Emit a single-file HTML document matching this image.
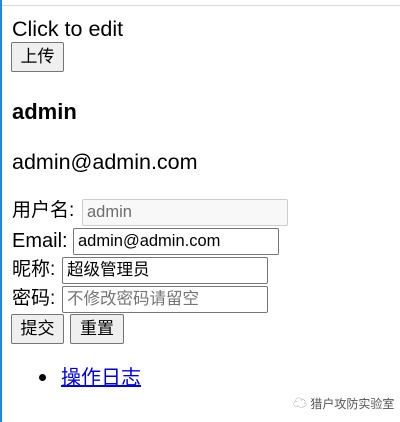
<!DOCTYPE html>
<html><head><meta charset="utf-8"><style>
html,body{margin:0;padding:0;width:400px;height:422px;overflow:hidden;background:#fff;position:relative;font-family:"Liberation Sans","Noto Sans CJK SC",sans-serif;color:#000}
.a{position:absolute;white-space:nowrap}
.lb{font-size:19px;line-height:22px}
.in{position:absolute;box-sizing:border-box;border:1px solid #767676;border-radius:2px;background:#fff;font-size:16.5px;line-height:24px;padding-left:4px;height:27px;width:206px;color:#000;font-family:"Liberation Sans","Noto Sans CJK SC",sans-serif}
.bt{position:absolute;box-sizing:border-box;border:1px solid #767676;border-radius:2px;background:#efefef;font-size:17px;text-align:center;line-height:27px;height:30px}
</style></head><body>
<div class="a" style="left:0;top:0;width:2px;height:422px;background:#1e88e5"></div>
<div class="a" style="left:2px;top:5px;width:398px;height:1px;background:#d8d8d8"></div>
<div class="a lb" style="left:12px;top:18px;font-size:21.5px">Click to edit</div>
<div class="bt" style="left:11px;top:42px;width:53px">上传</div>
<div class="a" style="left:12px;top:99px;font-size:22px;font-weight:bold;line-height:26px">admin</div>
<div class="a" style="left:12px;top:150px;font-size:21.5px;line-height:24px">admin@admin.com</div>
<div class="a lb" style="left:12px;top:200px">用户名:</div>
<div class="in" style="left:82px;top:199px;width:206px;background:#f8f8f8;border-color:#ccc;color:#6d6d6d">admin</div>
<div class="a lb" style="left:12px;top:230px;font-size:20px">Email:</div>
<div class="in" style="left:73px;top:228px;width:206px">admin@admin.com</div>
<div class="a lb" style="left:12px;top:259px">昵称:</div>
<div class="in" style="left:62px;top:257px;width:206px">超级管理员</div>
<div class="a lb" style="left:12px;top:288px">密码:</div>
<div class="in" style="left:62px;top:286px;width:206px;color:#757575">不修改密码请留空</div>
<div class="bt" style="left:11px;top:314px;width:53px">提交</div>
<div class="bt" style="left:70px;top:314px;width:54px">重置</div>
<div class="a" style="left:39px;top:374px;width:7px;height:7px;border-radius:50%;background:#000"></div>
<div class="a" style="left:61px;top:366px;font-size:20px;line-height:24px;color:#0000ee;text-decoration:underline">操作日志</div>
<div class="a" style="left:293px;top:396px;font-size:12px;color:#555;line-height:14px"><span style="color:#999;font-size:14px">☁</span> 猎户攻防实验室</div>
</body></html>
